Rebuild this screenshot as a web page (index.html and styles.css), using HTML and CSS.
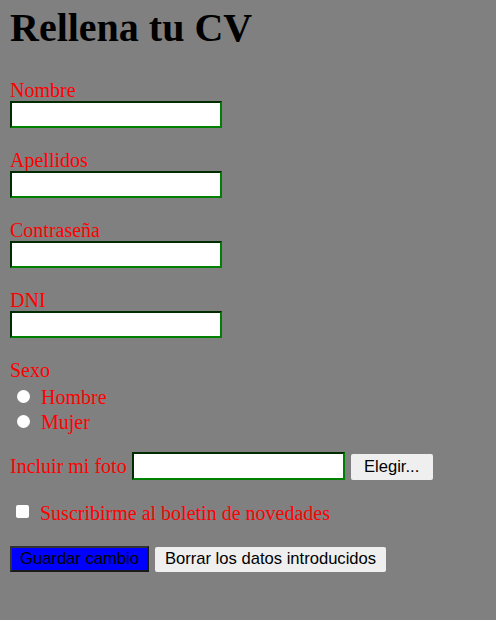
FILE: index.html
```html
<!DOCTYPE html>
<html lang="es">
<head>
<meta charset="utf-8">
<title>Rellena tu CV</title>
<link rel="stylesheet" href="styles.css">
</head>
<body>
<h1 class="title">Rellena tu CV</h1>
<form class="cv-form">
  <div class="field">
    <label class="lbl" for="nombre">Nombre</label>
    <input class="txt" type="text" id="nombre">
  </div>
  <div class="field">
    <label class="lbl" for="apellidos">Apellidos</label>
    <input class="txt" type="text" id="apellidos">
  </div>
  <div class="field">
    <label class="lbl" for="pass">Contraseña</label>
    <input class="txt" type="password" id="pass">
  </div>
  <div class="field">
    <label class="lbl" for="dni">DNI</label>
    <input class="txt" type="text" id="dni">
  </div>
  <div class="field">
    <span class="lbl">Sexo</span>
    <label class="opt"><input class="radio" type="radio" name="sexo"><span>Hombre</span></label>
    <label class="opt"><input class="radio" type="radio" name="sexo"><span>Mujer</span></label>
  </div>
  <div class="row foto">
    <label class="lbl" for="foto">Incluir mi foto</label>
    <input class="txt" type="text" id="foto">
    <button class="btn" type="button">Elegir...</button>
  </div>
  <div class="row check">
    <input class="checkbox" type="checkbox" id="news">
    <label class="lbl" for="news">Suscribirme al boletin de novedades</label>
  </div>
  <div class="row actions">
    <button class="btn btn-save" type="submit">Guardar cambio</button>
    <button class="btn btn-reset" type="reset">Borrar los datos introducidos</button>
  </div>
</form>
</body>
</html>
```
FILE: styles.css
```css
html, body {
  background: #808080;
}
body {
  margin: 0;
  padding: 6px 10px 10px;
  font-family: "Liberation Serif", "Times New Roman", serif;
  font-size: 20px;
}
.title {
  margin: 0;
  font-size: 40px;
  font-weight: bold;
  line-height: 44px;
  color: #000;
}
.cv-form {
  display: flex;
  flex-direction: column;
  margin-top: 28px;
}
.field {
  display: flex;
  flex-direction: column;
  align-items: flex-start;
  margin-bottom: 20px;
}
.lbl {
  color: #ff0000;
  line-height: 23px;
}
.field > .lbl {
  padding-top: 1px;
  margin-bottom: -1px;
}
.txt {
  box-sizing: border-box;
  width: 212px;
  height: 27px;
  margin: 0;
  padding: 1px 2px;
  border: 2px inset #008000;
  background: #fff;
  font-size: 13px;
}
.opt {
  display: flex;
  align-items: center;
  height: 25px;
  margin-top: 4px;
  margin-bottom: -4px;
  color: #ff0000;
}
.radio {
  appearance: none;
  -webkit-appearance: none;
  width: 13px;
  height: 13px;
  margin: -3px 11px 0 7px;
  border-radius: 50%;
  background: #fff;
}
.row {
  display: flex;
  align-items: center;
}
.foto {
  margin-top: 1px;
  gap: 6px;
}
.foto .txt {
  width: 213px;
  height: 28px;
  margin-left: -1px;
}
.btn {
  box-sizing: border-box;
  height: 26px;
  margin: 0;
  padding: 0;
  border: none;
  border-radius: 2px;
  background: #efefef;
  color: #000;
  font-family: "Liberation Sans", Arial, sans-serif;
  font-size: 16.6px;
  white-space: nowrap;
  text-align: center;
}
.foto .btn {
  width: 82px;
  margin-top: 2px;
}
.check {
  margin-top: 22px;
  height: 23px;
}
.checkbox {
  appearance: none;
  -webkit-appearance: none;
  width: 13px;
  height: 13px;
  margin: -4px 11px 0 6px;
  border-radius: 2px;
  background: #fff;
}
.actions {
  margin-top: 21px;
  gap: 6px;
}
.btn-save {
  width: 139px;
  height: 26px;
  background: #0000ff;
  border: 2px solid;
  border-color: #333 #1a1a1a #1a1a1a #333;
  border-radius: 0;
}
.btn-reset {
  width: 231px;
  height: 25px;
}
```
